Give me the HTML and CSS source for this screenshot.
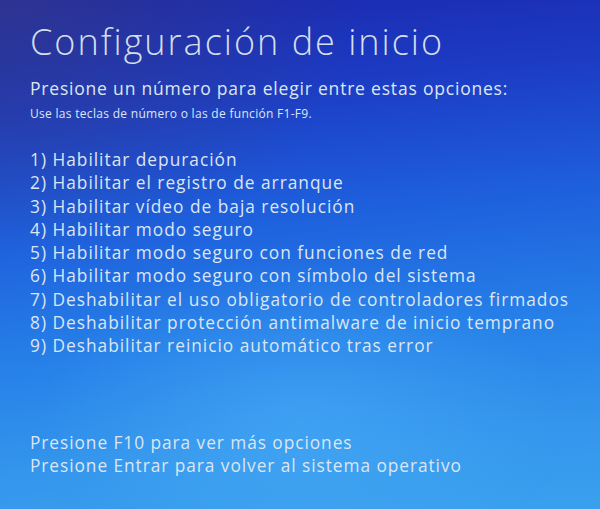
FILE: index.html
```html
<!DOCTYPE html>
<html lang="es">
<head>
<meta charset="utf-8">
<link rel="stylesheet" href="styles.css">
</head>
<body>
<main class="screen">
  <h1 class="title">Configuración de inicio</h1>
  <p class="prompt">Presione un número para elegir entre estas opciones:</p>
  <p class="hint">Use las teclas de número o las de función F1-F9.</p>
  <ol class="options">
    <li>1) Habilitar depuración</li>
    <li>2) Habilitar el registro de arranque</li>
    <li>3) Habilitar vídeo de baja resolución</li>
    <li>4) Habilitar modo seguro</li>
    <li>5) Habilitar modo seguro con funciones de red</li>
    <li>6) Habilitar modo seguro con símbolo del sistema</li>
    <li>7) Deshabilitar el uso obligatorio de controladores firmados</li>
    <li>8) Deshabilitar protección antimalware de inicio temprano</li>
    <li>9) Deshabilitar reinicio automático tras error</li>
  </ol>
  <div class="footer">
    <p>Presione F10 para ver más opciones</p>
    <p>Presione Entrar para volver al sistema operativo</p>
  </div>
</main>
</body>
</html>
```

FILE: styles.css
```css
html, body {
  margin: 0;
  padding: 0;
  width: 600px;
  height: 509px;
  overflow: hidden;
}
body {
  font-family: "Open Sans", "Noto Sans", sans-serif;
  color: #dce6f2;
}
.screen {
  box-sizing: border-box;
  width: 600px;
  height: 509px;
  padding: 18px 0 0 30px;
  background:
    radial-gradient(ellipse 260px 160px at 300px 420px, rgba(80, 180, 250, 0.45), rgba(80, 180, 250, 0) 100%),
    radial-gradient(ellipse 360px 260px at 0% 0%, rgba(60, 60, 120, 0.55), rgba(60, 60, 120, 0) 100%),
    linear-gradient(175deg, #1b28ae 0%, #1c3cc4 20%, #1e5fdc 42%, #2680e8 65%, #3496ec 85%, #3aa0ee 100%);
  display: flex;
  flex-direction: column;
}
.title {
  margin: 0;
  font-weight: 300;
  font-size: 36px;
  line-height: 48px;
  letter-spacing: 2px;
  color: #d4deec;
}
.prompt {
  margin: 11px 0 0;
  font-size: 17.5px;
  line-height: 22px;
  letter-spacing: 0.8px;
}
.hint {
  margin: 7px 0 0;
  font-size: 12px;
  line-height: 16px;
  letter-spacing: 0.3px;
}
.options {
  list-style: none;
  margin: 26px 0 0;
  padding: 0;
  font-size: 17.3px;
  line-height: 23.3px;
  letter-spacing: 1px;
}
.footer {
  margin-top: 73px;
  font-size: 17.3px;
  line-height: 23px;
  letter-spacing: 0.95px;
}
.footer p {
  margin: 0;
}
```
